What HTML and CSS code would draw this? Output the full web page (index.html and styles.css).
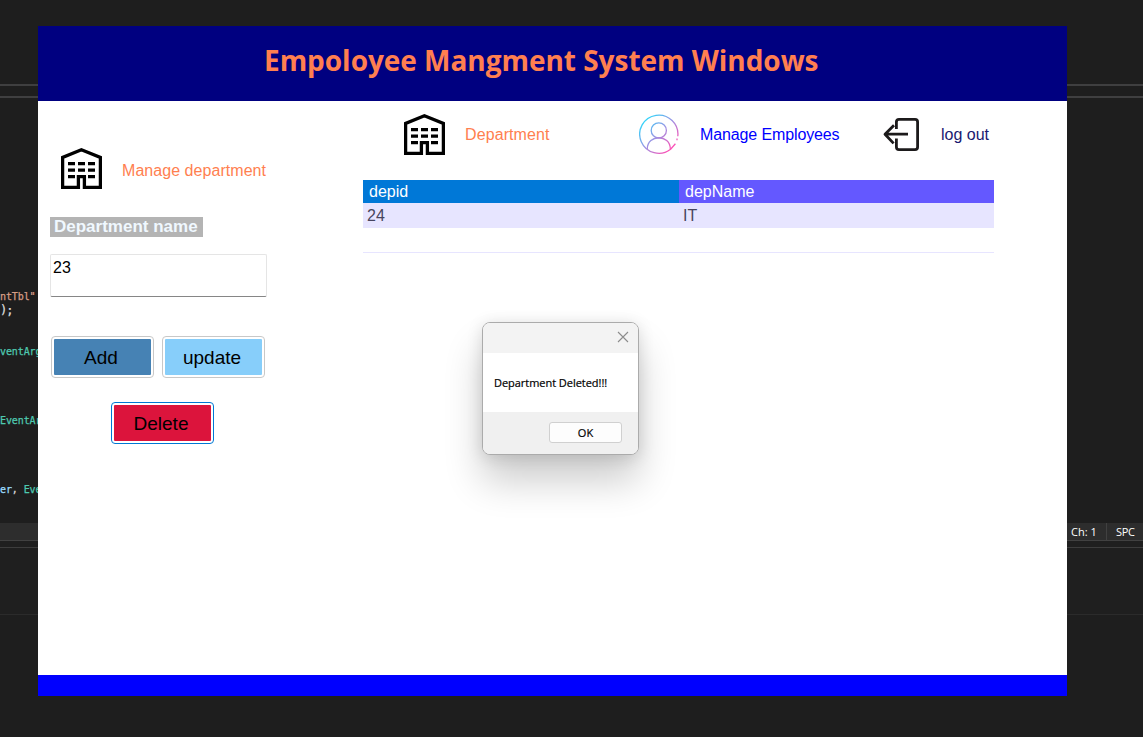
FILE: index.html
```
<!DOCTYPE html>
<html lang="en">
<head>
<meta charset="utf-8">
<title>Empoloyee Mangment System Windows</title>
<link rel="stylesheet" href="styles.css">
</head>
<body>
<div class="desktop">
  <div class="editor">
    <div class="editor-top"></div>
    <div class="editor-band"></div>
    <pre class="code"><span class="str">ntTbl"</span>
<span class="plain">);</span>


<span class="type">ventArgs</span>




<span class="type">EventArgs</span>




<span class="param">er</span>, <span class="type">EventArgs</span></pre>
    <div class="status"><span class="status-item">Ch: 1</span><span class="status-item status-spc">SPC</span></div>
    <div class="panel-head"></div>
    <div class="panel-body"></div>
  </div>

  <div class="window">
    <header class="titlebar"><h1 class="title">Empoloyee Mangment System Windows</h1></header>
    <div class="content">
      <aside class="form">
        <div class="form-head">
          <svg class="building" viewBox="0 0 41 41"><path class="wall" d="M1.6 39.4H17.4V28.6H23.4V39.4H39.4V9.5L20.4 1.8L1.6 9.5Z"/><path class="panes" d="M7 15.6h7M17 15.6h7M27 15.6h7M7 22.1h7M17 22.1h7M27 22.1h7M7 28.6h7M27 28.6h7"/></svg>
          <span class="form-title">Manage department</span>
        </div>
        <label class="field-label">Department name</label>
        <div class="field">23</div>
        <div class="buttons">
          <div class="btn add"><span>Add</span></div>
          <div class="btn update"><span>update</span></div>
        </div>
        <div class="btn delete"><span>Delete</span></div>
      </aside>
      <main class="main">
        <nav class="nav">
          <svg class="building" viewBox="0 0 41 41"><path class="wall" d="M1.6 39.4H17.4V28.6H23.4V39.4H39.4V9.5L20.4 1.8L1.6 9.5Z"/><path class="panes" d="M7 15.6h7M17 15.6h7M27 15.6h7M7 22.1h7M17 22.1h7M27 22.1h7M7 28.6h7M27 28.6h7"/></svg>
          <span class="nav-dep">Department</span>
          <svg class="user" viewBox="0 0 40 40">
            <defs><linearGradient id="g" gradientUnits="userSpaceOnUse" x1="5" y1="5" x2="34" y2="34"><stop offset="0" stop-color="#2bd9fb"/><stop offset=".5" stop-color="#9a94e4"/><stop offset="1" stop-color="#ff4fb4"/></linearGradient></defs>
            <g fill="none" stroke="url(#g)" stroke-width="1.3"><path d="M38.8 22.3A19.1 19.1 0 1 0 31.6 35.2L36.4 29.8"/><path d="M38 24.6v1.6"/><circle cx="19.8" cy="16.4" r="7.6"/><path d="M8.3 35C8.3 20 31.3 20 31.3 35"/></g>
          </svg>
          <span class="nav-emp">Manage Employees</span>
          <svg class="logout" viewBox="0 0 38 35"><path d="M13.4 12V5Q13.4 2.4 16 2.4H32Q34.6 2.4 34.6 5V30Q34.6 32.6 32 32.6H16Q13.4 32.6 13.4 30V21.5M25 17.2H2M11 8.2L2 17.2L10.6 26.4"/></svg>
          <span class="nav-out">log out</span>
        </nav>
        <div class="table">
          <div class="row head"><div class="cell active">depid</div><div class="cell">depName</div></div>
          <div class="row data"><div class="cell">24</div><div class="cell">IT</div></div>
          <div class="row blank"></div>
        </div>
      </main>
    </div>
    <footer class="foot"></footer>
  </div>

  <div class="dialog">
    <div class="dialog-head"><svg class="close" viewBox="0 0 12 12"><path d="M1 1L11 11M11 1L1 11"/></svg></div>
    <div class="dialog-body">Department Deleted!!!</div>
    <div class="dialog-foot"><div class="ok">OK</div></div>
  </div>
</div>
</body>
</html>
```
FILE: styles.css
```
* { box-sizing: border-box; }
body { margin: 0; background: #1f1f1f; font-family: "Liberation Sans", Arial, sans-serif; }
.desktop { position: relative; width: 1143px; height: 737px; overflow: hidden; }

/* code editor behind the window */
.editor { display: flex; flex-direction: column; height: 737px; background: #1e1e1e; }
.editor-top { height: 86px; border-bottom: 2px solid #3f3f40; }
.editor-band { height: 12px; border-bottom: 2px solid #3f3f40; }
.code { margin: 192px 0 0; height: 233px; width: 200px; overflow: hidden; font: 10px/13.8px "DejaVu Sans Mono", monospace; color: #dcdcdc; letter-spacing: -0.1px; -webkit-text-stroke: 0.25px; }
.plain { font-size: 12px; line-height: 10px; letter-spacing: -1px; }
.str { color: #d69d85; }
.type { color: #4ec9b0; }
.param { color: #9cdcfe; }
.status { height: 18px; display: flex; justify-content: flex-end; background: #2d2d2d; border-bottom: 1px solid #414141; font: 11px/17px "Open Sans", sans-serif; color: #fff; }
.status-item { width: 35px; }
.status-spc { width: 37px; padding-left: 9px; border-left: 1px solid #414141; letter-spacing: -0.3px; }
.panel-head { height: 7px; border-bottom: 1px solid #3d3d3d; background: #1f1f1f; }
.panel-body { height: 67px; border-bottom: 1px solid #2b2b2b; background: #1f1f1f; }

/* application window */
.window { position: absolute; left: 38px; top: 26px; width: 1029px; height: 670px; display: flex; flex-direction: column; background: #fff; }
.titlebar { height: 75px; background: navy; padding: 14px 0 0 226px; }
.title { margin: 0; font: bold 28px/40px "Open Sans", "Noto Sans", sans-serif; letter-spacing: -0.03px; color: coral; white-space: nowrap; }
.content { flex: 1; display: flex; font-size: 16px; white-space: nowrap; }
.foot { height: 21px; background: blue; }

.form { width: 325px; padding: 47px 0 0 12px; display: flex; flex-direction: column; align-items: flex-start; }
.form-head { display: flex; align-items: center; gap: 20px; height: 41px; margin-left: 11px; color: coral; }
.form-title { padding-top: 4px; letter-spacing: 0.05px; }
.building { width: 41px; height: 41px; }
.wall { fill: none; stroke: #000; stroke-width: 3.3; }
.panes { fill: none; stroke: #000; stroke-width: 3.2; }
.field-label { margin-top: 28px; width: 153px; height: 20px; padding-left: 4px; background: #b4b4b4; color: #f0f8ff; font-size: 17px; font-weight: bold; line-height: 20px; }
.field { margin-top: 17px; width: 217px; height: 43px; padding: 4px 2px; border: 1px solid #e5e5e5; border-bottom-color: #868686; border-radius: 2px; line-height: 18px; }
.buttons { display: flex; gap: 8px; margin: 39px 0 0 1px; }
.btn { width: 103px; height: 42px; padding: 2px; border: 1px solid #c8c8c8; border-radius: 4px; display: flex; justify-content: center; background-clip: content-box; font-size: 19px; line-height: 37px; }
.add { background-color: steelblue; }
.update { background-color: lightskyblue; }
.delete { margin: 24px 0 0 61px; border-color: #0078d4; background-color: crimson; }
.btn span { margin-left: -3px; }

.main { flex: 1; }
.nav { display: flex; align-items: center; height: 67px; padding-left: 41px; }
.nav-dep { width: 85px; margin-left: 20px; color: coral; letter-spacing: 0.1px; }
.user { width: 40px; height: 40px; margin: -1px 0 0 89px; }
.nav-emp { width: 140px; margin-left: 21px; color: blue; letter-spacing: -0.12px; }
.logout { width: 38px; height: 35px; margin-left: 43px; fill: none; stroke: #1c1a1b; stroke-width: 2.8; stroke-linejoin: round; stroke-linecap: butt; }
.nav-out { margin-left: 20px; color: #191970; }
.table { margin-top: 12px; width: 631px; }
.row { display: flex; }
.head { height: 23px; background: #6458ff; color: #fff; line-height: 23px; }
.head .cell { padding-left: 6px; }
.active { background: #0078d7; }
.cell { flex: none; width: 316px; }
.cell + .cell { width: 315px; }
.data { height: 25px; background: #e7e5ff; color: #47455e; line-height: 25px; }
.data .cell { padding-left: 4px; }
.blank { height: 25px; border-bottom: 1px solid #e7e5ff; }

/* message box */
.dialog { position: absolute; left: 482px; top: 322px; width: 157px; height: 133px; display: flex; flex-direction: column; border: 1px solid #ababab; border-radius: 8px; overflow: hidden; background: #fff; box-shadow: 0 26px 38px rgba(0,0,0,.2), 0 2px 16px rgba(0,0,0,.13); font: 11px "Open Sans", sans-serif; color: #000; -webkit-text-stroke: 0.2px; }
.dialog-head { height: 30px; background: #f3f3f3; display: flex; justify-content: flex-end; align-items: center; padding: 0 9px 2px 0; }
.close { width: 12px; height: 12px; fill: none; stroke: #8c8c8c; stroke-width: 1.1; }
.dialog-body { height: 59px; padding-left: 11px; line-height: 60px; letter-spacing: -0.04px; white-space: nowrap; }
.dialog-foot { flex: 1; background: #f0f0f0; display: flex; justify-content: flex-end; padding: 10px 16px 0 0; }
.ok { width: 73px; height: 21px; border: 1px solid #d0d0d0; border-radius: 3px; background: #fdfdfd; text-align: center; line-height: 20px; }
```
